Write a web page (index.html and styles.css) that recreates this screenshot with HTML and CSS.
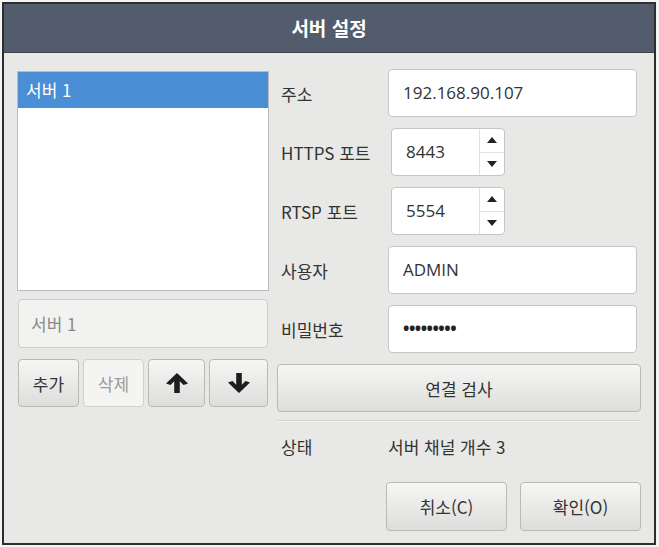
FILE: index.html
```html
<!DOCTYPE html>
<html lang="ko">
<head>
    <meta charset="UTF-8">
    <title>서버 설정</title>
    <link rel="stylesheet" href="styles.css">
</head>
<body>

<div class="dialog">
    <div class="dialog-title">서버 설정</div>

    <div class="dialog-body">
        <div class="left-col">
            <div class="server-list">
                <div class="server-item selected">서버 1</div>
            </div>
            <div class="name-box">서버 1</div>
            <div class="list-buttons">
                <button class="btn small">추가</button>
                <button class="btn small disabled">삭제</button>
                <button class="btn arrow">
                    <svg width="24" height="24" viewBox="0 0 24 24"><path d="M12 2 L23 12.5 L18.5 14 L14.8 10.2 L14.8 22 L9.2 22 L9.2 10.2 L5.5 14 L1 12.5 Z" fill="#1e1e1e"/></svg>
                </button>
                <button class="btn arrow">
                    <svg width="24" height="24" viewBox="0 0 24 24"><path d="M12 22 L23 11.5 L18.5 10 L14.8 13.8 L14.8 2 L9.2 2 L9.2 13.8 L5.5 10 L1 11.5 Z" fill="#1e1e1e"/></svg>
                </button>
            </div>
        </div>

        <div class="right-col">
            <div class="form-row">
                <label>주소</label>
                <div class="field">192.168.90.107</div>
            </div>
            <div class="form-row">
                <label>HTTPS 포트</label>
                <div class="spin">
                    <span class="spin-value">8443</span>
                    <span class="spin-arrows">
                        <span class="spin-up"><svg width="10" height="6" viewBox="0 0 10 6"><path d="M0 6 L5 0 L10 6 Z" fill="#222"/></svg></span>
                        <span class="spin-down"><svg width="10" height="6" viewBox="0 0 10 6"><path d="M0 0 L5 6 L10 0 Z" fill="#222"/></svg></span>
                    </span>
                </div>
            </div>
            <div class="form-row">
                <label>RTSP 포트</label>
                <div class="spin">
                    <span class="spin-value">5554</span>
                    <span class="spin-arrows">
                        <span class="spin-up"><svg width="10" height="6" viewBox="0 0 10 6"><path d="M0 6 L5 0 L10 6 Z" fill="#222"/></svg></span>
                        <span class="spin-down"><svg width="10" height="6" viewBox="0 0 10 6"><path d="M0 0 L5 6 L10 0 Z" fill="#222"/></svg></span>
                    </span>
                </div>
            </div>
            <div class="form-row">
                <label>사용자</label>
                <div class="field">ADMIN</div>
            </div>
            <div class="form-row">
                <label>비밀번호</label>
                <div class="field password">&#8226;&#8226;&#8226;&#8226;&#8226;&#8226;&#8226;&#8226;&#8226;</div>
            </div>
            <button class="btn wide">연결 검사</button>
            <div class="separator"></div>
            <div class="status-row">
                <span class="status-label">상태</span>
                <span>서버 채널 개수 3</span>
            </div>
            <div class="dialog-buttons">
                <button class="btn action">취소(C)</button>
                <button class="btn action">확인(O)</button>
            </div>
        </div>
    </div>
</div>

</body>
</html>
```

FILE: styles.css
```css
body {
    margin: 0;
    background-color: #f4f4f4;
    font-family: "Noto Sans CJK KR", "Noto Sans", sans-serif;
    font-size: 17px;
    color: #333;
}

.dialog {
    margin: 2px 0 0 2px;
    width: 650px;
    height: 539px;
    border: 2px solid #2e2e2e;
    background-color: #e8e8e6;
}

.dialog-title {
    height: 48px;
    line-height: 48px;
    background-color: #525c6c;
    border-bottom: 1px solid #3e4552;
    color: #fff;
    font-size: 19px;
    font-weight: bold;
    text-align: center;
}

.dialog-body {
    display: flex;
    gap: 8px;
    padding: 18px 0 0 13px;
}

.left-col {
    width: 252px;
    display: flex;
    flex-direction: column;
}

.server-list {
    height: 218px;
    background-color: #fff;
    border: 1px solid #bcbcbc;
}

.server-item {
    height: 36px;
    line-height: 36px;
    padding-left: 8px;
}

.server-item.selected {
    background-color: #4a8fd6;
    color: #fff;
}

.name-box {
    margin: 8px 1px 0 1px;
    height: 47px;
    line-height: 47px;
    padding-left: 12px;
    background-color: #f2f2f0;
    border: 1px solid #cdcdcd;
    border-radius: 4px;
    color: #8a8a8a;
}

.list-buttons {
    display: flex;
    gap: 4px;
    margin: 11px 0 0 1px;
}

.btn {
    font-family: inherit;
    font-size: 17px;
    color: #333;
    background: linear-gradient(#f6f6f5, #dddddb);
    border: 1px solid #b9b9b7;
    border-radius: 4px;
    height: 48px;
    padding: 0;
}

.btn.small {
    width: 61px;
}

.btn.disabled {
    background: #f4f4f3;
    border-color: #cfcfcd;
    color: #9a9a9a;
}

.btn.arrow {
    width: 57px;
    display: flex;
    align-items: center;
    justify-content: center;
}

.btn.arrow + .btn.arrow {
    width: 59px;
}

.right-col {
    width: 364px;
    display: flex;
    flex-direction: column;
}

.form-row {
    display: flex;
    align-items: center;
    height: 48px;
    margin-bottom: 11px;
}

.form-row:first-child {
    margin-top: -2px;
}

.form-row label {
    width: 111px;
    padding-left: 4px;
    box-sizing: border-box;
}

.field {
    width: 249px;
    height: 48px;
    line-height: 46px;
    box-sizing: border-box;
    padding-left: 14px;
    background-color: #fff;
    border: 1px solid #c6c6c4;
    border-radius: 4px;
    font-family: "Open Sans", "Noto Sans", sans-serif;
}

.field.password {
    letter-spacing: -0.5px;
    font-size: 17px;
    font-weight: bold;
    color: #222;
}

.spin {
    margin-left: 3px;
    width: 114px;
    height: 48px;
    box-sizing: border-box;
    display: flex;
    background-color: #fff;
    border: 1px solid #c6c6c4;
    border-radius: 4px;
    font-family: "Open Sans", "Noto Sans", sans-serif;
}

.spin-value {
    flex: 1;
    line-height: 46px;
    padding-left: 14px;
}

.spin-arrows {
    width: 24px;
    display: flex;
    flex-direction: column;
    border-left: 1px solid #e0e0e0;
}

.spin-up,
.spin-down {
    flex: 1;
    display: flex;
    align-items: center;
    justify-content: center;
}

.spin-up {
    border-bottom: 1px solid #e0e0e0;
}

.btn.wide {
    width: 364px;
    margin-top: 0;
}

.separator {
    margin-top: 8px;
    height: 1px;
    background-color: #d2d2d0;
    border-bottom: 1px solid #f4f4f2;
}

.status-row {
    display: flex;
    height: 48px;
    align-items: center;
    padding-left: 4px;
}

.status-label {
    width: 107px;
}

.dialog-buttons {
    display: flex;
    justify-content: flex-end;
    gap: 13px;
    margin-top: 12px;
}

.btn.action {
    width: 121px;
    height: 49px;
}
```
